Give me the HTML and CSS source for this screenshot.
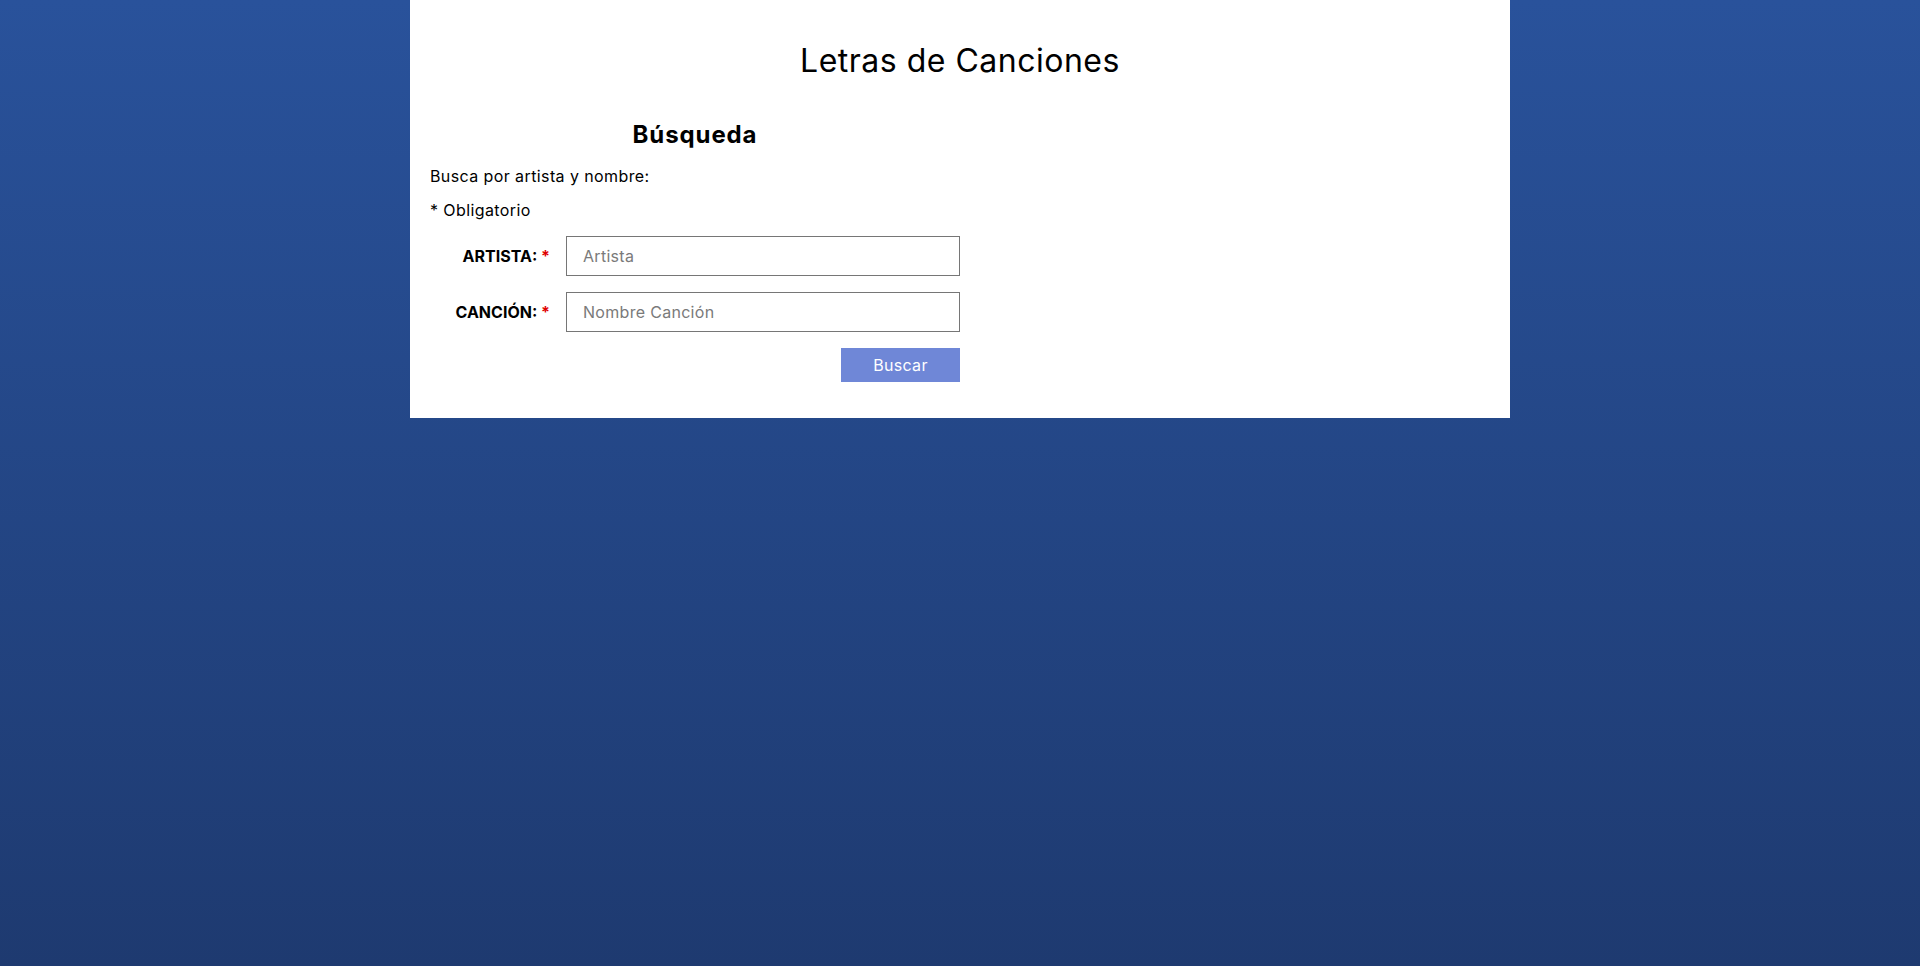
FILE: index.html
```html
<!DOCTYPE html>
<html lang="es">
<head>
<meta charset="utf-8">
<title>Letras de Canciones</title>
<link rel="stylesheet" href="styles.css">
</head>
<body>
<main class="card">
  <h1 class="title">Letras de Canciones</h1>
  <div class="columns">
    <section class="search">
      <h2 class="search-title">Búsqueda</h2>
      <p class="text intro">Busca por artista y nombre:</p>
      <p class="text note">* Obligatorio</p>
      <form class="form">
        <div class="row">
          <label class="label" for="artista">ARTISTA: <span class="req">*</span></label>
          <input class="field" id="artista" type="text" placeholder="Artista">
        </div>
        <div class="row">
          <label class="label" for="cancion">CANCIÓN: <span class="req">*</span></label>
          <input class="field" id="cancion" type="text" placeholder="Nombre Canción">
        </div>
        <div class="actions">
          <button class="btn" type="button">Buscar</button>
        </div>
      </form>
    </section>
    <section class="result"></section>
  </div>
</main>
</body>
</html>
```

FILE: styles.css
```css
html, body {
  margin: 0;
  padding: 0;
  min-height: 100%;
}
body {
  min-height: 966px;
  background: linear-gradient(to bottom, #29529b 0%, #1e3a70 100%);
  font-family: Inter, "Noto Sans", sans-serif;
  color: #000;
}
.card {
  width: 1100px;
  margin: 0 auto;
  background: #fff;
  box-sizing: border-box;
  padding: 20px 20px 36px;
}
.title {
  margin: 21px 0 0;
  font-size: 32px;
  font-weight: 400;
  line-height: 39px;
  letter-spacing: 0.5px;
  text-align: center;
}
.columns {
  display: flex;
  margin-top: 40px;
}
.search, .result {
  flex: 1;
}
.search-title {
  margin: 0;
  font-size: 24px;
  font-weight: 700;
  line-height: 29px;
  letter-spacing: 0.9px;
  text-align: center;
}
.text {
  margin: 0;
  font-size: 16px;
  line-height: 19.5px;
  letter-spacing: 0.4px;
}
.intro {
  margin-top: 18px;
}
.note {
  margin-top: 14px;
}
.form {
  margin-top: 16px;
  display: flex;
  flex-direction: column;
  gap: 16px;
}
.row {
  display: flex;
  align-items: center;
}
.label {
  width: 120px;
  margin-right: 16px;
  text-align: right;
  font-weight: 700;
  font-size: 16px;
}
.req {
  color: #e00000;
}
.field {
  flex: 1;
  height: 40px;
  box-sizing: border-box;
  border: 1px solid #767676;
  padding: 0 16px;
  font-family: inherit;
  font-size: 16px;
  letter-spacing: 0.3px;
  outline: none;
}
.field::placeholder {
  color: #7a7a7a;
}
.actions {
  display: flex;
  justify-content: flex-end;
}
.btn {
  width: 119px;
  height: 34px;
  border: none;
  background: #6f87d7;
  color: #fff;
  font-family: inherit;
  font-size: 16px;
  letter-spacing: 0.3px;
}
```
